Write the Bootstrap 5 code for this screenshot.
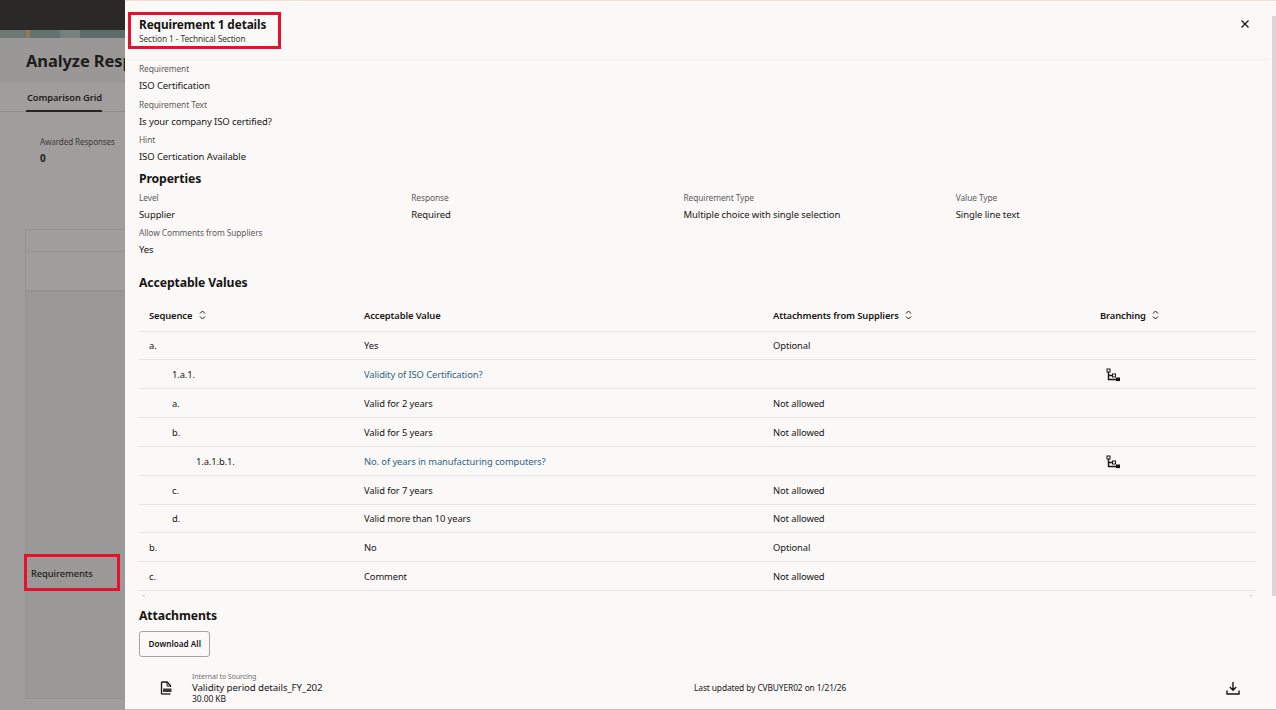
<!DOCTYPE html>
<html lang="en">
<head>
<meta charset="utf-8">
<title>Requirement 1 details</title>
<link rel="stylesheet" href="https://cdn.jsdelivr.net/npm/bootstrap@5.3.0/dist/css/bootstrap.min.css">
<style>
html,body{height:710px;overflow:hidden}
body{font-family:"Noto Sans","Open Sans",sans-serif;font-size:10px;color:#161513;background:#a09e9c;letter-spacing:-.01em}
.shell{height:710px}
.backdrop{width:125px;flex:none;overflow:hidden;background:#a09e9c;color:#1e1d1b}
.topband{height:30px;background:#2b2927}
.artband{height:8px;background:linear-gradient(90deg,#6d7774 0 26px,#8d7a5c 26px 30px,#65716f 30px 60px,#77807d 60px 80px,#5f6b69 80px)}
.titleband{height:45px;background:#9a9896;padding:12px 0 0 26px;font-size:16.500px;font-weight:700;white-space:nowrap;line-height:22px}
.tabs{height:29px;border-bottom:1px solid #8f8d8b;padding:9px 0 0 27px;font-size:9.300px;font-weight:600;line-height:12px;position:relative}
.tabs::after{content:"";position:absolute;left:26px;width:76px;bottom:-1px;height:2px;background:#242321}
.tabs span{display:block;white-space:nowrap}
.metric{padding:24px 0 0 40px;height:117px;white-space:nowrap;font-size:8.100px;line-height:12px;color:#3c3a38}
.metric b{display:block;font-size:10px;margin-top:4px;color:#1e1d1b}
.gridbox{margin-left:25px;border:1px solid #959391;border-right:0;height:470px;background:#9b9998;display:flex;flex-direction:column}
.gridhead{height:22px;background:#a09e9c;border-bottom:1px solid #959391;flex:none}
.gridsub{height:40px;background:#a09e9c;border-bottom:2px solid #959391;flex:none}
.gridreq{padding:276px 0 0 5px;font-size:9.400px;font-weight:500;line-height:12px;position:relative}
.flag{position:absolute;border:3px solid #e8112d}
.flag-side{left:-2px;top:262px;width:96px;height:37px}
.flag-head{left:3px;top:11px;width:153px;height:37px}
.drawer{flex:1;min-width:0;background:#fbf9f8;border-top:1px solid #f6dfd2;border-bottom:1px solid #c4c2c0;height:710px;overflow:hidden;position:relative;padding-right:6px}
.drawer-head{height:59px;border-bottom:1px solid #f3f1ef;padding:15px 14px 0;position:relative}
.drawer-head h1{font-size:11.800px;font-weight:700;line-height:17px;margin:0}
.drawer-head p{font-size:8.350px;line-height:11px;margin:0;color:#3c3a38}
.closer{position:absolute;right:20px;top:18px;width:10px;height:10px;display:block}
.drawer-body{padding:3px 14px 0}
.lbl{font-size:8.400px;line-height:12px;color:#5e5c5a;display:block}
.val{font-size:9.500px;line-height:14px;display:block;margin-top:4px;margin-bottom:5.500px}
.sect{font-size:12.200px;font-weight:700;line-height:17px;margin:0}
.props{width:1089px;--bs-gutter-x:0;margin-top:5px}
.acceptable{margin-top:17px}
.attachhead{margin-top:7px}
.section-gap{margin-top:2.500px}
.reqtable{width:1117px;margin:9px 0 0;table-layout:fixed;--bs-table-bg:transparent;--bs-table-color:#161513}
.reqtable th,.reqtable td{font-size:9.400px;line-height:13px;padding:0 0 0 10px;vertical-align:middle;height:28.850px;border-bottom:1px solid #e7e5e3}
.reqtable td{padding-top:1px}
.reqtable th{font-weight:600;height:31px}
.in1,.in1a{padding-left:33px!important}
.in2{padding-left:57px!important}
.reqtable a{color:#2b6587;text-decoration:none}
.sorter{width:7px;height:10px;margin-left:4px;vertical-align:-1px}
.branchicon{width:14px;height:14px;margin-left:6px;vertical-align:middle}
.tblfoot{height:9px;display:flex;justify-content:space-between;padding:2px 3px;width:1117px;color:#d5d3d1;font-size:5px;line-height:5px}
.dlall{--bs-btn-font-size:8.200px;--bs-btn-font-weight:600;--bs-btn-color:#161513;--bs-btn-border-color:#a5a3a1;--bs-btn-hover-bg:#f1efed;--bs-btn-hover-color:#161513;--bs-btn-border-radius:3px;--bs-btn-padding-x:8.500px;--bs-btn-padding-y:0;height:26px;line-height:24px;display:block;margin-top:7px;white-space:nowrap}
.attach{height:33px;margin-top:14px;width:1117px}
.docicon{width:12px;height:14px;margin-left:21px;margin-right:20px;flex:none}
.attach small{display:block;font-size:7.100px;line-height:10px;color:#6f6d6b}
.attach strong{display:block;font-weight:400;font-size:9.700px;line-height:13px}
.attach em{display:block;font-style:normal;font-size:8.500px;line-height:10px}
.updated{font-size:8.400px;position:absolute;left:569px;top:681px;line-height:12px}
.getfile{position:absolute;left:1101px;top:680px;width:14px;height:14px}
.scrolltrack{position:absolute;top:0;right:0;bottom:0;width:6px;background:#fbf9f8}
.scrollthumb{position:absolute;top:15px;right:0;width:4px;height:580px;background:#dad8d6}
</style>
</head>
<body>
<div class="d-flex shell">
  <div class="backdrop">
    <div class="topband"></div>
    <div class="artband"></div>
    <div class="titleband">Analyze Resp</div>
    <div class="tabs"><span>Comparison Grid</span></div>
    <div class="metric">Awarded Responses<b>0</b></div>
    <div class="gridbox">
      <div class="gridhead"></div>
      <div class="gridsub"></div>
      <div class="gridreq">Requirements<span class="flag flag-side"></span></div>
    </div>
  </div>
  <div class="drawer">
    <div class="drawer-head">
      <h1>Requirement 1 details</h1>
      <p>Section 1 - Technical Section</p>
      <span class="flag flag-head"></span>
      <svg class="closer" viewBox="0 0 10 10"><path d="M1.500 1.500l7 7M8.500 1.500l-7 7" stroke="#161513" stroke-width="1.300" fill="none"/></svg>
    </div>
    <div class="drawer-body">
      <span class="lbl">Requirement</span><span class="val">ISO Certification</span>
      <span class="lbl">Requirement Text</span><span class="val">Is your company ISO certified?</span>
      <span class="lbl">Hint</span><span class="val">ISO Certication Available</span>
      <h2 class="sect section-gap">Properties</h2>
      <div class="row props">
        <div class="col-3"><span class="lbl">Level</span><span class="val">Supplier</span></div>
        <div class="col-3"><span class="lbl">Response</span><span class="val">Required</span></div>
        <div class="col-3"><span class="lbl">Requirement Type</span><span class="val">Multiple choice with single selection</span></div>
        <div class="col-3"><span class="lbl">Value Type</span><span class="val">Single line text</span></div>
      </div>
      <span class="lbl">Allow Comments from Suppliers</span><span class="val">Yes</span>
      <h2 class="sect acceptable">Acceptable Values</h2>
      <table class="table reqtable">
        <colgroup><col style="width:215px"><col style="width:409px"><col style="width:327px"><col></colgroup>
        <thead>
          <tr>
            <th>Sequence <svg class="sorter" viewBox="0 0 7 10"><path d="M1 3.500L3.500 1 6 3.500M1 6.500L3.500 9 6 6.500" stroke="#161513" fill="none"/></svg></th>
            <th>Acceptable Value</th>
            <th>Attachments from Suppliers <svg class="sorter" viewBox="0 0 7 10"><path d="M1 3.500L3.500 1 6 3.500M1 6.500L3.500 9 6 6.500" stroke="#161513" fill="none"/></svg></th>
            <th>Branching <svg class="sorter" viewBox="0 0 7 10"><path d="M1 3.500L3.500 1 6 3.500M1 6.500L3.500 9 6 6.500" stroke="#161513" fill="none"/></svg></th>
          </tr>
        </thead>
        <tbody>
          <tr><td>a.</td><td>Yes</td><td>Optional</td><td></td></tr>
          <tr><td class="in1">1.a.1.</td><td><a href="#">Validity of ISO Certification?</a></td><td></td><td><svg class="branchicon" viewBox="0 0 14 14"><path d="M2.500 4v7.500H11M2.500 7.500H7" stroke="#161513" stroke-width="1.400" fill="none"/><rect x="1" y="1" width="3" height="3" fill="none" stroke="#161513"/><rect x="6.500" y="6" width="3" height="3" fill="none" stroke="#161513"/><rect x="10" y="9.500" width="4" height="3.600" fill="#161513"/></svg></td></tr>
          <tr><td class="in1a">a.</td><td>Valid for 2 years</td><td>Not allowed</td><td></td></tr>
          <tr><td class="in1a">b.</td><td>Valid for 5 years</td><td>Not allowed</td><td></td></tr>
          <tr><td class="in2">1.a.1.b.1.</td><td><a href="#">No. of years in manufacturing computers?</a></td><td></td><td><svg class="branchicon" viewBox="0 0 14 14"><path d="M2.500 4v7.500H11M2.500 7.500H7" stroke="#161513" stroke-width="1.400" fill="none"/><rect x="1" y="1" width="3" height="3" fill="none" stroke="#161513"/><rect x="6.500" y="6" width="3" height="3" fill="none" stroke="#161513"/><rect x="10" y="9.500" width="4" height="3.600" fill="#161513"/></svg></td></tr>
          <tr><td class="in1a">c.</td><td>Valid for 7 years</td><td>Not allowed</td><td></td></tr>
          <tr><td class="in1a">d.</td><td>Valid more than 10 years</td><td>Not allowed</td><td></td></tr>
          <tr><td>b.</td><td>No</td><td>Optional</td><td></td></tr>
          <tr><td>c.</td><td>Comment</td><td>Not allowed</td><td></td></tr>
        </tbody>
      </table>
      <div class="tblfoot"><span>◂</span><span>▸</span></div>
      <h2 class="sect attachhead">Attachments</h2>
      <button type="button" class="btn dlall">Download All</button>
      <div class="d-flex align-items-center attach">
        <svg class="docicon" viewBox="0 0 12 14"><path d="M1.500 1h5.500l3.500 3.500V6M1.500 1v12" fill="none" stroke="#161513" stroke-width="1.300"/><path d="M1.500 13h9" stroke="#161513" stroke-width="1.300"/><path d="M7 1v4h3.500" fill="none" stroke="#161513"/><rect x="3" y="7.500" width="8.500" height="3.500" fill="#3c3a38"/></svg>
        <div><small>Internal to Sourcing</small><strong>Validity period details_FY_202</strong><em>30.00 KB</em></div>
      </div>
    </div>
    <span class="updated">Last updated by CVBUYER02 on 1/21/26</span>
    <svg class="getfile" viewBox="0 0 14 14"><path d="M7 1v8M3.800 6L7 9.200 10.200 6M1 9.500V13h12V9.500" fill="none" stroke="#161513" stroke-width="1.400"/></svg>
    <div class="scrolltrack"><div class="scrollthumb"></div></div>
  </div>
</div>
</body>
</html>
